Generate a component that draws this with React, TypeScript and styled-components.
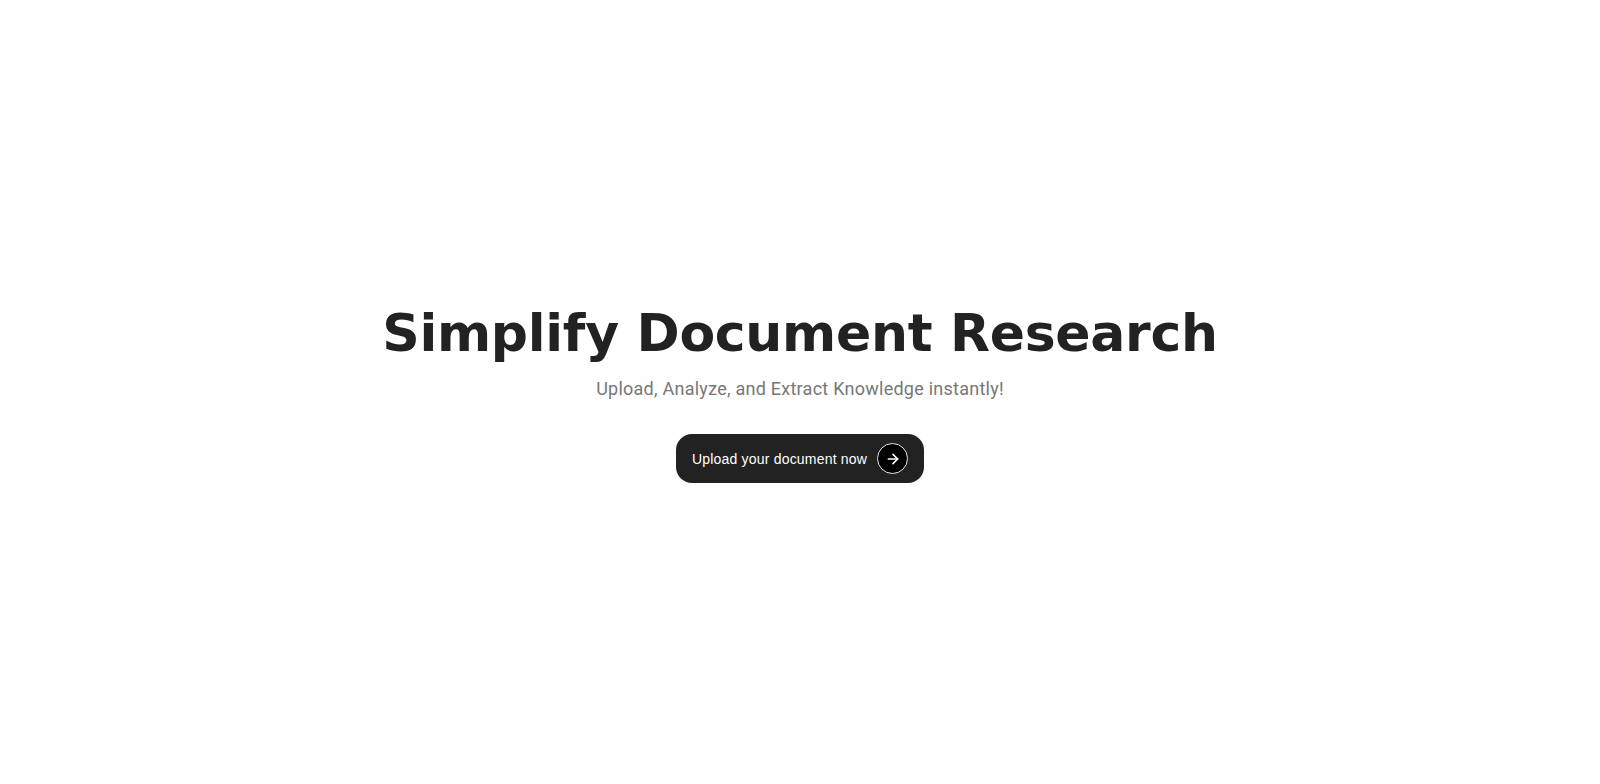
import React from "react";
import styled, { createGlobalStyle } from "styled-components";

const Global = createGlobalStyle`
  html, body { margin: 0; padding: 0; background: #ffffff; }
  * { box-sizing: border-box; }
`;

const Page = styled.main`
  min-height: 100vh;
  display: flex;
  flex-direction: column;
  align-items: center;
  justify-content: center;
  background: #ffffff;
`;

const Title = styled.h1`
  margin: 0;
  font-family: "DejaVu Sans", "Liberation Sans", Arial, sans-serif;
  font-weight: 700;
  font-size: 52px;
  line-height: 64px;
  color: #222222;
  letter-spacing: -0.3px;
`;

const Subtitle = styled.p`
  margin: 11px 0 0;
  font-family: Roboto, "Noto Sans", sans-serif;
  font-size: 18px;
  line-height: 26px;
  color: #777777;
  letter-spacing: 0.25px;
`;

const CTA = styled.button`
  margin-top: 32px;
  height: 49px;
  display: flex;
  align-items: center;
  gap: 10px;
  padding: 0 16px;
  border: none;
  border-radius: 16px;
  background: #222222;
  color: #ffffff;
  font-family: "Liberation Sans", Arial, sans-serif;
  font-size: 14px;
  font-weight: 400;
  letter-spacing: 0.2px;
  cursor: pointer;
`;

const ArrowBadge = styled.span`
  width: 31px;
  height: 31px;
  border-radius: 50%;
  background: #000000;
  border: 1.5px solid #e6e6e6;
  display: flex;
  align-items: center;
  justify-content: center;
`;

export default function App() {
  return (
    <>
      <Global />
      <Page>
        <Title>Simplify Document Research</Title>
        <Subtitle>Upload, Analyze, and Extract Knowledge instantly!</Subtitle>
        <CTA>
          Upload your document now
          <ArrowBadge>
            <svg width="16" height="16" viewBox="0 0 24 24" fill="none" stroke="#ffffff" strokeWidth="2.4" strokeLinecap="round" strokeLinejoin="round">
              <path d="M5 12h14" />
              <path d="m12 5 7 7-7 7" />
            </svg>
          </ArrowBadge>
        </CTA>
      </Page>
    </>
  );
}
